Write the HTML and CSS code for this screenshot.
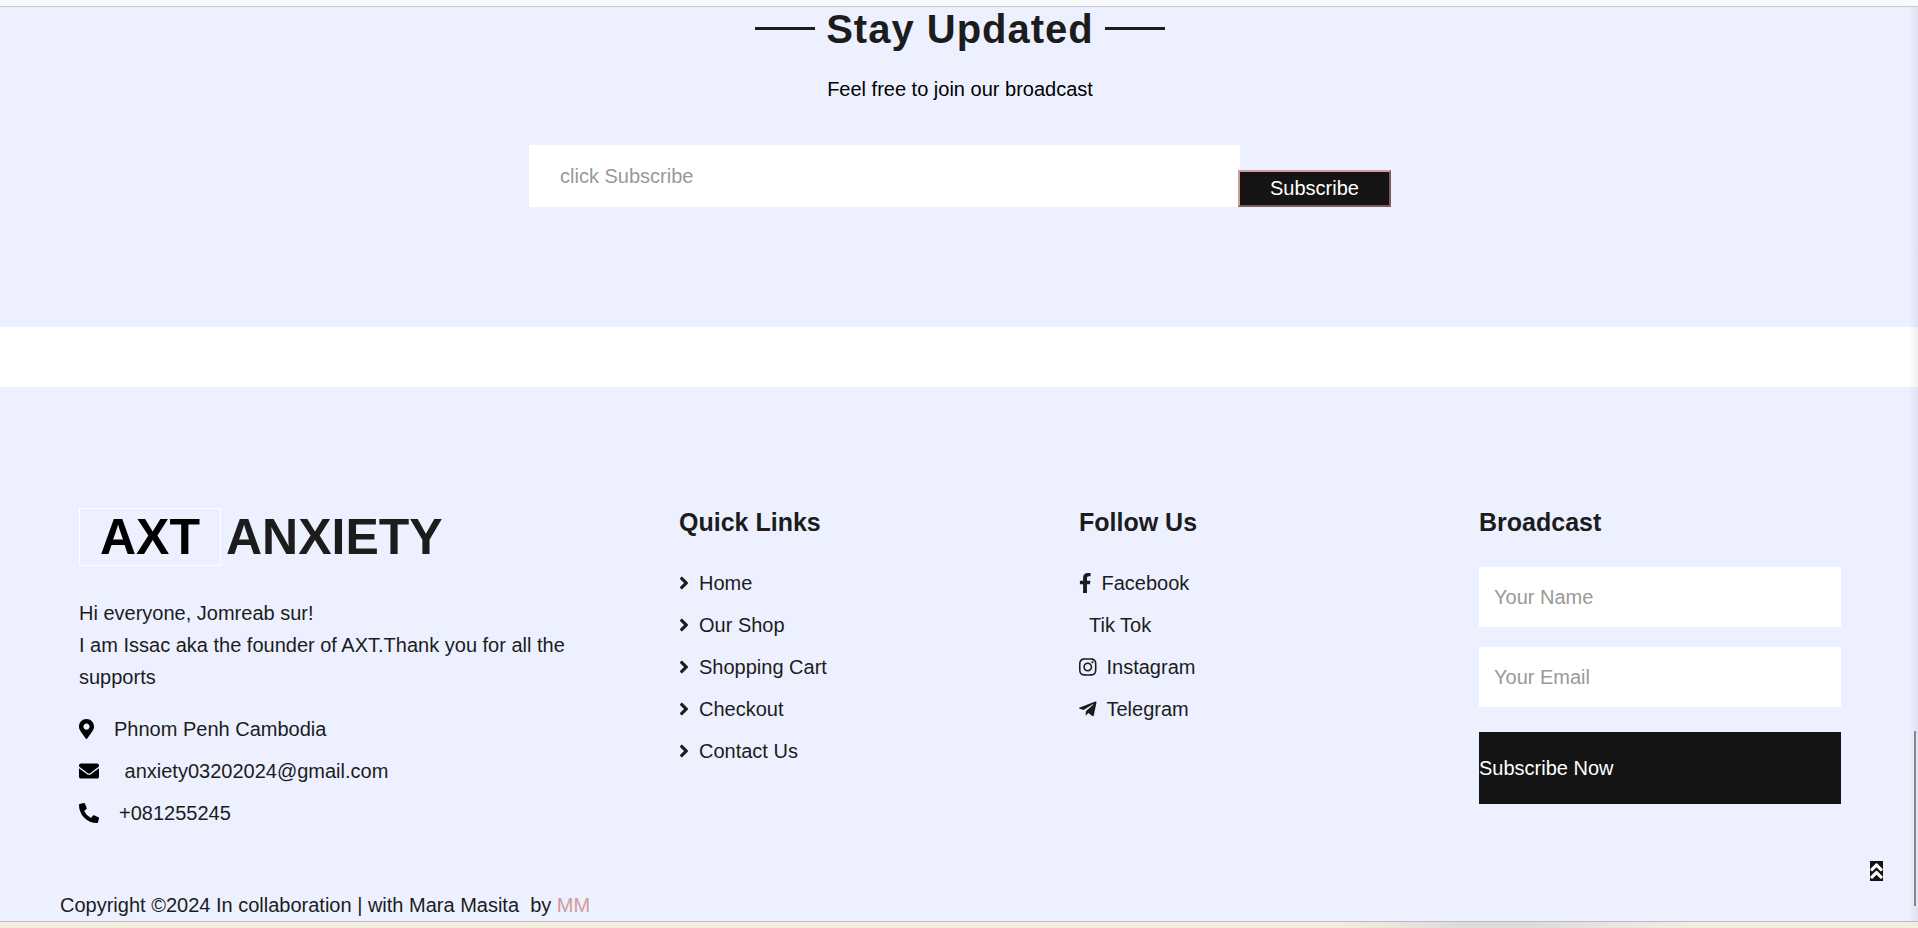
FILE: index.html
```html
<!DOCTYPE html>
<html lang="en">
<head>
<meta charset="utf-8">
<title>AXT Anxiety</title>
<link rel="stylesheet" href="styles.css">
</head>
<body>
<div class="top-strip"></div>
<section class="subscribe">
  <h2 class="section-title">Stay Updated</h2>
  <p class="lead">Feel free to join our broadcast</p>
  <form class="subscribe-form">
    <input class="subscribe-input" type="text" placeholder="click Subscribe" aria-label="click Subscribe">
    <button class="subscribe-button" type="button">Subscribe</button>
  </form>
</section>
<footer class="footer">
  <div class="columns">
    <div class="column">
      <h1 class="brand"><span class="brand-box">AXT</span> <span>ANXIETY</span></h1>
      <p class="about">Hi everyone, Jomreab sur!<br>I am Issac aka the founder of AXT.Thank you for all the supports</p>
      <ul class="list contact">
        <li><svg class="icon" viewBox="0 0 384 512"><path d="M172.268 501.67C26.97 291.031 0 269.413 0 192 0 85.961 85.961 0 192 0s192 85.961 192 192c0 77.413-26.97 99.031-172.268 309.67-9.535 13.774-29.93 13.773-39.464 0zM192 272c44.183 0 80-35.817 80-80s-35.817-80-80-80-80 35.817-80 80 35.817 80 80 80z"/></svg><span>Phnom Penh Cambodia</span></li>
        <li><svg class="icon" viewBox="0 0 512 512"><path d="M502.3 190.8c3.900-3.100 9.700-.2 9.700 4.700V400c0 26.500-21.500 48-48 48H48c-26.500 0-48-21.500-48-48V195.600c0-5 5.700-7.800 9.700-4.700 22.400 17.400 52.100 39.500 154.100 113.600 21.100 15.400 56.700 47.800 92.200 47.600 35.700.3 72-32.800 92.300-47.600 102-74.100 131.600-96.300 154-113.700zM256 320c23.200.4 56.600-29.200 73.400-41.400 132.700-96.300 142.800-104.700 173.400-128.700 5.800-4.500 9.200-11.500 9.200-18.900v-19c0-26.500-21.500-48-48-48H48c-26.500 0-48 21.500-48 48v19c0 7.400 3.400 14.300 9.200 18.900 30.600 23.900 40.700 32.400 173.400 128.700 16.800 12.200 50.200 41.800 73.400 41.400z"/></svg><span>&nbsp;anxiety03202024@gmail.com</span></li>
        <li><svg class="icon" viewBox="0 0 512 512"><path d="M497.390 361.800l-112-48a24 24 0 0 0-28 6.900l-49.600 60.600A370.660 370.660 0 0 1 130.600 204.110l60.600-49.600a23.940 23.940 0 0 0 6.900-28l-48-112A24.160 24.160 0 0 0 122.600.610l-104 24A24 24 0 0 0 0 48c0 256.500 207.900 464 464 464a24 24 0 0 0 23.400-18.600l24-104a24.290 24.290 0 0 0-14.010-27.600z"/></svg><span>+081255245</span></li>
      </ul>
    </div>
    <div class="column">
      <h5 class="heading">Quick Links</h5>
      <svg class="symbols" aria-hidden="true"><symbol id="angle" viewBox="0 0 256 512"><path d="M224.300 273l-136 136c-9.400 9.400-24.600 9.400-33.900 0l-22.600-22.600c-9.400-9.400-9.400-24.600 0-33.900l96.400-96.400-96.400-96.400c-9.400-9.400-9.400-24.600 0-33.900L54.300 103c9.400-9.400 24.600-9.400 33.900 0l136 136c9.500 9.400 9.500 24.600.1 34z"/></symbol></svg>
      <ul class="list">
        <li><a href="#"><svg class="icon" viewBox="0 0 256 512"><use href="#angle"/></svg>Home</a></li>
        <li><a href="#"><svg class="icon" viewBox="0 0 256 512"><use href="#angle"/></svg>Our Shop</a></li>
        <li><a href="#"><svg class="icon" viewBox="0 0 256 512"><use href="#angle"/></svg>Shopping Cart</a></li>
        <li><a href="#"><svg class="icon" viewBox="0 0 256 512"><use href="#angle"/></svg>Checkout</a></li>
        <li><a href="#"><svg class="icon" viewBox="0 0 256 512"><use href="#angle"/></svg>Contact Us</a></li>
      </ul>
    </div>
    <div class="column">
      <h5 class="heading">Follow Us</h5>
      <ul class="list">
        <li><a href="#"><svg class="icon" viewBox="0 0 320 512"><path d="M279.140 288l14.220-92.660h-88.910v-60.130c0-25.350 12.420-50.060 52.240-50.060h40.420V6.260S260.430 0 225.360 0c-73.220 0-121.080 44.380-121.080 124.720v70.620H22.890V288h81.390v224h100.170V288z"/></svg>Facebook</a></li>
        <li><a href="#"><span class="icon"></span>Tik Tok</a></li>
        <li><a href="#"><svg class="icon" viewBox="0 0 448 512"><path d="M224.100 141c-63.600 0-114.900 51.300-114.900 114.900s51.300 114.900 114.900 114.900S339 319.500 339 255.900 287.700 141 224.100 141zm0 189.600c-41.100 0-74.700-33.500-74.700-74.700s33.500-74.700 74.700-74.700 74.700 33.500 74.700 74.700-33.600 74.700-74.700 74.700zm146.400-194.300c0 14.900-12 26.800-26.800 26.800-14.900 0-26.800-12-26.800-26.800s12-26.800 26.800-26.800 26.800 12 26.800 26.800zm76.100 27.200c-1.700-35.900-9.900-67.700-36.200-93.900-26.200-26.200-58-34.400-93.900-36.200-37-2.100-147.900-2.100-184.900 0-35.800 1.700-67.600 9.900-93.900 36.100s-34.400 58-36.200 93.900c-2.100 37-2.100 147.900 0 184.900 1.700 35.900 9.900 67.700 36.200 93.900s58 34.400 93.900 36.200c37 2.100 147.900 2.100 184.900 0 35.900-1.700 67.700-9.900 93.900-36.200 26.200-26.200 34.400-58 36.200-93.900 2.100-37 2.100-147.800 0-184.800zM398.800 388c-7.800 19.600-22.900 34.700-42.600 42.600-29.500 11.700-99.500 9-132.100 9s-102.700 2.600-132.100-9c-19.600-7.800-34.700-22.900-42.600-42.600-11.700-29.500-9-99.500-9-132.100s-2.600-102.700 9-132.100c7.800-19.600 22.900-34.700 42.600-42.600 29.500-11.700 99.500-9 132.100-9s102.700-2.600 132.100 9c19.600 7.800 34.700 22.900 42.600 42.600 11.700 29.500 9 99.500 9 132.100s2.700 102.700-9 132.100z"/></svg>Instagram</a></li>
        <li><a href="#"><svg class="icon" viewBox="0 0 448 512"><path d="M446.700 98.600l-67.600 318.800c-5.100 22.500-18.400 28.100-37.300 17.500l-103-75.900-49.700 47.800c-5.500 5.500-10.100 10.100-20.700 10.100l7.400-104.900 190.900-172.500c8.300-7.400-1.800-11.500-12.900-4.100L117.800 284 16.200 252.200c-22.100-6.900-22.500-22.100 4.600-32.700L418.200 66.400c18.400-6.900 34.500 4.100 28.500 32.200z"/></svg>Telegram</a></li>
      </ul>
    </div>
    <div class="column">
      <h5 class="heading">Broadcast</h5>
      <form class="broadcast-form">
        <input class="field" type="text" placeholder="Your Name" aria-label="Your Name">
        <input class="field" type="email" placeholder="Your Email" aria-label="Your Email">
        <button class="submit" type="button">Subscribe Now</button>
      </form>
    </div>
  </div>
  <p class="copyright">Copyright ©2024 In collaboration | with Mara Masita &nbsp;by <a href="#">MM</a></p>
</footer>
<div class="bottom-strip"></div>
<a class="back-to-top" href="#" aria-label="Back to top"><svg viewBox="0 0 320 512"><path d="M177 255.700l136 136c9.400 9.400 9.400 24.600 0 33.900l-22.600 22.600c-9.400 9.400-24.600 9.400-33.900 0L160 351.900l-96.400 96.400c-9.400 9.400-24.600 9.400-33.900 0L7 425.700c-9.400-9.400-9.400-24.600 0-33.900l136-136c9.400-9.500 24.600-9.500 34-.1zm-34-192L7 199.700c-9.400 9.400-9.400 24.600 0 33.900l22.600 22.600c9.400 9.400 24.600 9.400 33.900 0l96.400-96.400 96.400 96.400c9.400 9.400 24.600 9.400 33.900 0l22.600-22.600c9.400-9.400 9.400-24.600 0-33.900l-136-136c-9.200-9.400-24.400-9.400-33.800 0z"/></svg></a>
<div class="edge-shade"></div>
<div class="scroll-thumb"></div>
</body>
</html>
```

FILE: styles.css
```css
* { box-sizing: border-box; }

body {
  margin: 0;
  position: relative;
  background: #fff;
  color: #1c1c1c;
  font-family: "Liberation Sans", Arial, sans-serif;
  font-size: 20px;
  line-height: 32px;
}

h1, h2, h5, p, ul { margin: 0; }

a { color: inherit; text-decoration: none; }

input, button {
  font: inherit;
  border: 0;
  border-radius: 0;
}

input::placeholder { color: #999; opacity: 1; }

.top-strip {
  height: 7px;
  background: #f9fafc;
  border-bottom: 1px solid #c8cacb;
}

.subscribe {
  padding: 2px 19px 120px 21px;
  background: #edf1ff;
}

.section-title {
  display: flex;
  justify-content: center;
  align-items: center;
  gap: 11px;
  font-size: 40px;
  line-height: 40px;
  letter-spacing: 1px;
}

.section-title::before,
.section-title::after {
  content: "";
  width: 60px;
  height: 3px;
  margin-bottom: 2px;
  background: #1c1c1c;
}

.lead {
  margin: 24px 0 40px;
  color: #000;
  text-align: center;
}

.subscribe-form {
  display: flex;
  justify-content: center;
  align-items: flex-end;
}

.subscribe-input {
  width: 711px;
  height: 62px;
  padding: 0 31px;
  background: #fff;
}

.subscribe-button {
  margin-left: -2px;
  padding: 0 30px;
  border: 2px outset #d19c97;
  background: #141414;
  color: #fff;
  line-height: 33px;
}

.footer {
  margin-top: 60px;
  padding: 120px 58px 0 60px;
  background: #edf1ff;
}

.columns {
  display: grid;
  grid-template-columns: 3fr 2fr 2fr 2fr;
}

.column { padding: 0 19px; }

.brand {
  display: flex;
  align-items: center;
  gap: 5px;
  margin-bottom: 30px;
  font-size: 50px;
  line-height: 60px;
}

.brand-box {
  padding: 0 20px;
  border: 1px solid #fff;
  color: #000;
  line-height: 56px;
}

.about { margin-bottom: 20px; }

.heading {
  margin-bottom: 30px;
  font-size: 25px;
  line-height: 30px;
}

.list {
  display: grid;
  gap: 10px;
  padding: 0;
  list-style: none;
}

.list a, .contact li {
  display: flex;
  align-items: center;
}

.icon {
  height: 20px;
  margin-right: 10px;
  fill: currentColor;
}

.contact .icon {
  margin-right: 20px;
  fill: #000;
}

.symbols { display: none; }

.broadcast-form {
  display: flex;
  flex-direction: column;
  gap: 20px;
}

.field {
  width: 100%;
  height: 60px;
  padding: 0 15px;
  background: #fff;
}

.submit {
  margin-top: 5px;
  padding: 20px 0;
  background: #141414;
  color: #fff;
  text-align: left;
}

.copyright { margin-top: 60px; }

.copyright a { color: #d19c97; }

.bottom-strip {
  height: 7px;
  border-top: 1px solid #b9bac2;
  background: linear-gradient(to right, #f4ecdd 0 70%, #dedcdb 76% 80%, #f2ede3 88%);
}

.back-to-top {
  position: absolute;
  right: 35px;
  bottom: 47px;
  width: 13px;
  height: 20px;
  background: #141414;
}

.back-to-top svg {
  display: block;
  width: 13px;
  height: 20px;
  fill: #fff;
}

.edge-shade {
  position: absolute;
  top: 7px;
  right: 0;
  bottom: 7px;
  width: 10px;
  background: linear-gradient(to right, rgba(0, 0, 30, 0), rgba(0, 0, 30, 0.06));
}

.scroll-thumb {
  position: absolute;
  right: 2px;
  bottom: 22px;
  width: 2px;
  height: 175px;
  background: #888;
}
```
